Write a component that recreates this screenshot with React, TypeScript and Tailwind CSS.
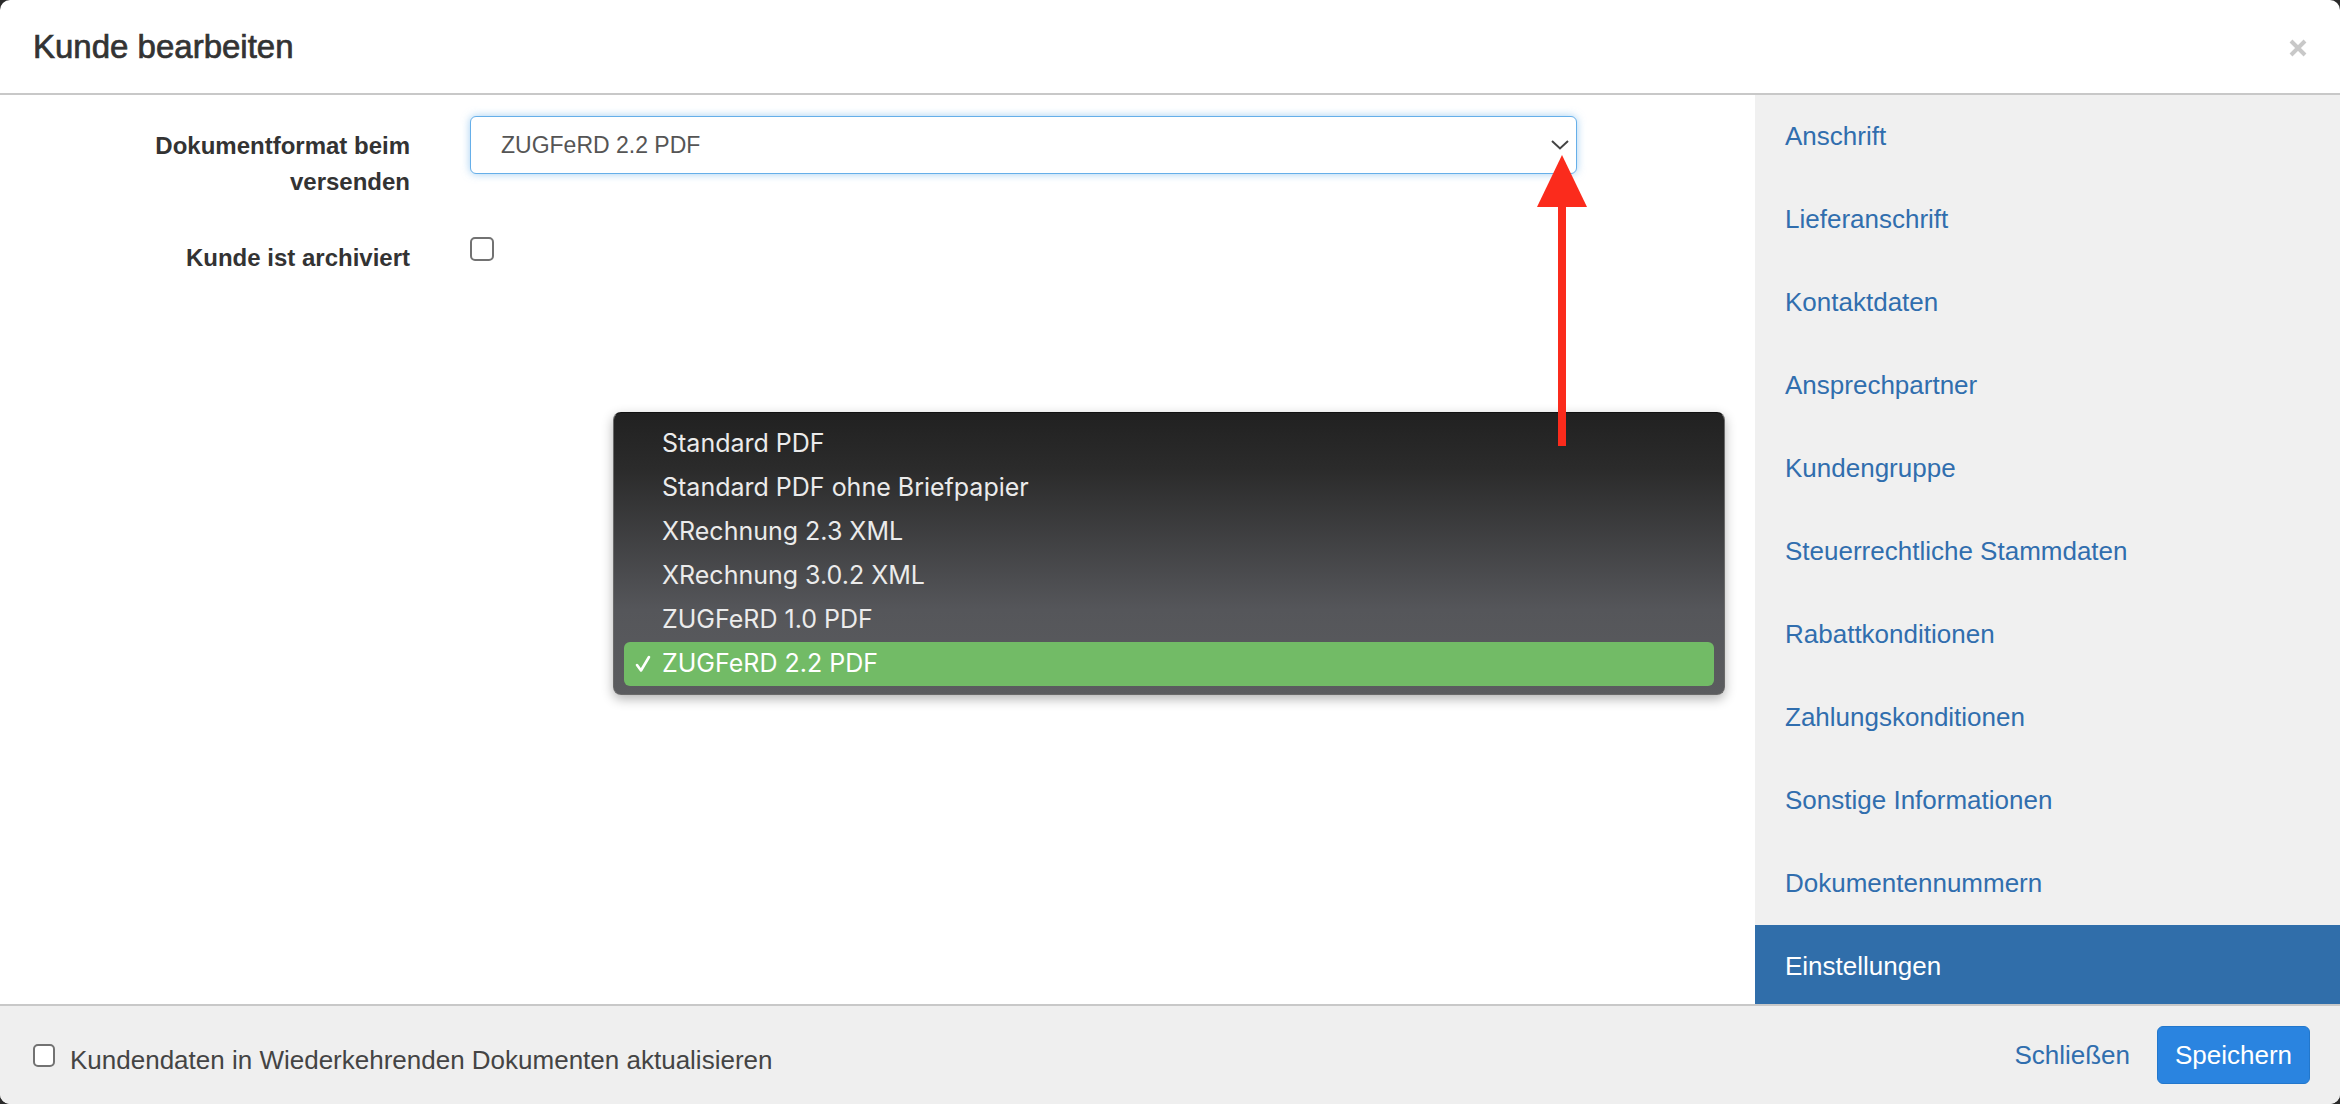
import React from 'react';

const navItems = [
  'Anschrift',
  'Lieferanschrift',
  'Kontaktdaten',
  'Ansprechpartner',
  'Kundengruppe',
  'Steuerrechtliche Stammdaten',
  'Rabattkonditionen',
  'Zahlungskonditionen',
  'Sonstige Informationen',
  'Dokumentennummern',
  'Einstellungen',
];

const formats = [
  'Standard PDF',
  'Standard PDF ohne Briefpapier',
  'XRechnung 2.3 XML',
  'XRechnung 3.0.2 XML',
  'ZUGFeRD 1.0 PDF',
  'ZUGFeRD 2.2 PDF',
];

const Checkbox: React.FC<{ size?: string }> = ({ size = 'w-[24px] h-[24px]' }) => (
  <div className={`${size} shrink-0 rounded-[5px] border-2 border-[#727272] bg-white`} />
);

const App: React.FC = () => {
  const selected = 'ZUGFeRD 2.2 PDF';

  return (
    <div className="relative h-[1104px] w-[2340px] overflow-hidden bg-[#2a2a2a] font-['Liberation_Sans',Arial,sans-serif]">
      <div className="flex h-full flex-col overflow-hidden rounded-[10px] bg-white">
        {/* header */}
        <div className="flex h-[95px] shrink-0 items-center justify-between border-b-2 border-[#c8c8c8] px-[33px]">
          <h1 className="text-[33px] leading-none text-[#333] [-webkit-text-stroke:0.7px_#333]">Kunde bearbeiten</h1>
          <svg width="18" height="18" viewBox="0 0 18 18" className="mt-[2px]">
            <path d="M2 2 L16 16 M16 2 L2 16" stroke="#c8c8c8" strokeWidth="4" />
          </svg>
        </div>

        {/* body */}
        <div className="relative flex min-h-0 flex-1">
          <div className="flex-1 pt-[21px]">
            <div className="flex items-start">
              <label className="w-[410px] pt-[12px] text-right text-[24px] leading-[36px] font-bold text-[#333]">
                Dokumentformat beim
                <br />
                versenden
              </label>
              <div className="ml-[60px] flex h-[58px] w-[1107px] items-center justify-between rounded-[6px] border border-[#66afe9] bg-white pr-[7px] pl-[30px] shadow-[0_0_8px_rgba(102,175,233,0.6)]">
                <span className="text-[23px] text-[#555]">{selected}</span>
                <svg width="18" height="10" viewBox="0 0 18 10">
                  <path d="M1 1 L9 8.5 L17 1" fill="none" stroke="#444" strokeWidth="2" />
                </svg>
              </div>
            </div>

            <div className="mt-[37px] flex items-start">
              <label className="w-[410px] pt-[3px] text-right text-[24px] leading-[36px] font-bold text-[#333]">
                Kunde ist archiviert
              </label>
              <div className="ml-[60px]">
                <Checkbox />
              </div>
            </div>
          </div>

          <nav className="w-[585px] shrink-0 overflow-hidden bg-[#f0f0f0]">
            {navItems.map((item) => {
              const active = item === 'Einstellungen';
              return (
                <div
                  key={item}
                  className={`flex h-[83px] items-center pl-[30px] text-[26px] ${
                    active ? 'bg-[#306eaa] text-white' : 'text-[#306eae]'
                  }`}
                >
                  {item}
                </div>
              );
            })}
          </nav>

          {/* native select popup */}
          <div className="absolute top-[317px] left-[613px] w-[1112px] rounded-[8px] border border-[#6a6a6a] border-t-[#111] bg-[linear-gradient(to_bottom,#212121_0%,#2b2b2b_20%,#55565a_70%,#5b5c5f_100%)] px-[10px] pt-[9px] pb-[8px] font-['Inter',sans-serif] shadow-[0_4px_12px_rgba(0,0,0,0.3)]">
            {formats.map((f) => {
              const isSel = f === selected;
              return (
                <div
                  key={f}
                  className={`flex h-[44px] items-center rounded-[6px] text-[25px] ${
                    isSel ? 'bg-[#72bb66] text-white' : 'text-[#ebebeb]'
                  }`}
                >
                  <span className="flex w-[38px] justify-center">
                    {isSel && (
                      <svg width="16" height="18" viewBox="0 0 16 18">
                        <path d="M2 10 L6 15.5 L14 2" fill="none" stroke="white" strokeWidth="2.6" strokeLinecap="round" strokeLinejoin="round" />
                      </svg>
                    )}
                  </span>
                  {f}
                </div>
              );
            })}
          </div>
        </div>

        {/* footer */}
        <div className="flex h-[100px] shrink-0 items-center justify-between border-t-2 border-[#c8c8c8] bg-[#efefef] pr-[30px] pl-[33px]">
          <label className="flex items-center">
            <Checkbox size="w-[22px] h-[23px]" />
            <span className="ml-[15px] pt-[11px] text-[26px] text-[#444]">
              Kundendaten in Wiederkehrenden Dokumenten aktualisieren
            </span>
          </label>
          <div className="flex items-center">
            <span className="mr-[27px] text-[26px] text-[#306eae]">Schließen</span>
            <button className="h-[58px] w-[153px] rounded-[6px] border border-[#2277cc] bg-[#2a84e0] text-[26px] text-white">
              Speichern
            </button>
          </div>
        </div>
      </div>

      {/* red annotation arrow */}
      <svg className="absolute top-[155px] left-[1537px]" width="50" height="292" viewBox="0 0 50 292">
        <polygon points="25,0 0,52 50,52" fill="#fb2b1c" />
        <rect x="21" y="50" width="8" height="241" fill="#fb2b1c" />
      </svg>
    </div>
  );
};

export default App;
